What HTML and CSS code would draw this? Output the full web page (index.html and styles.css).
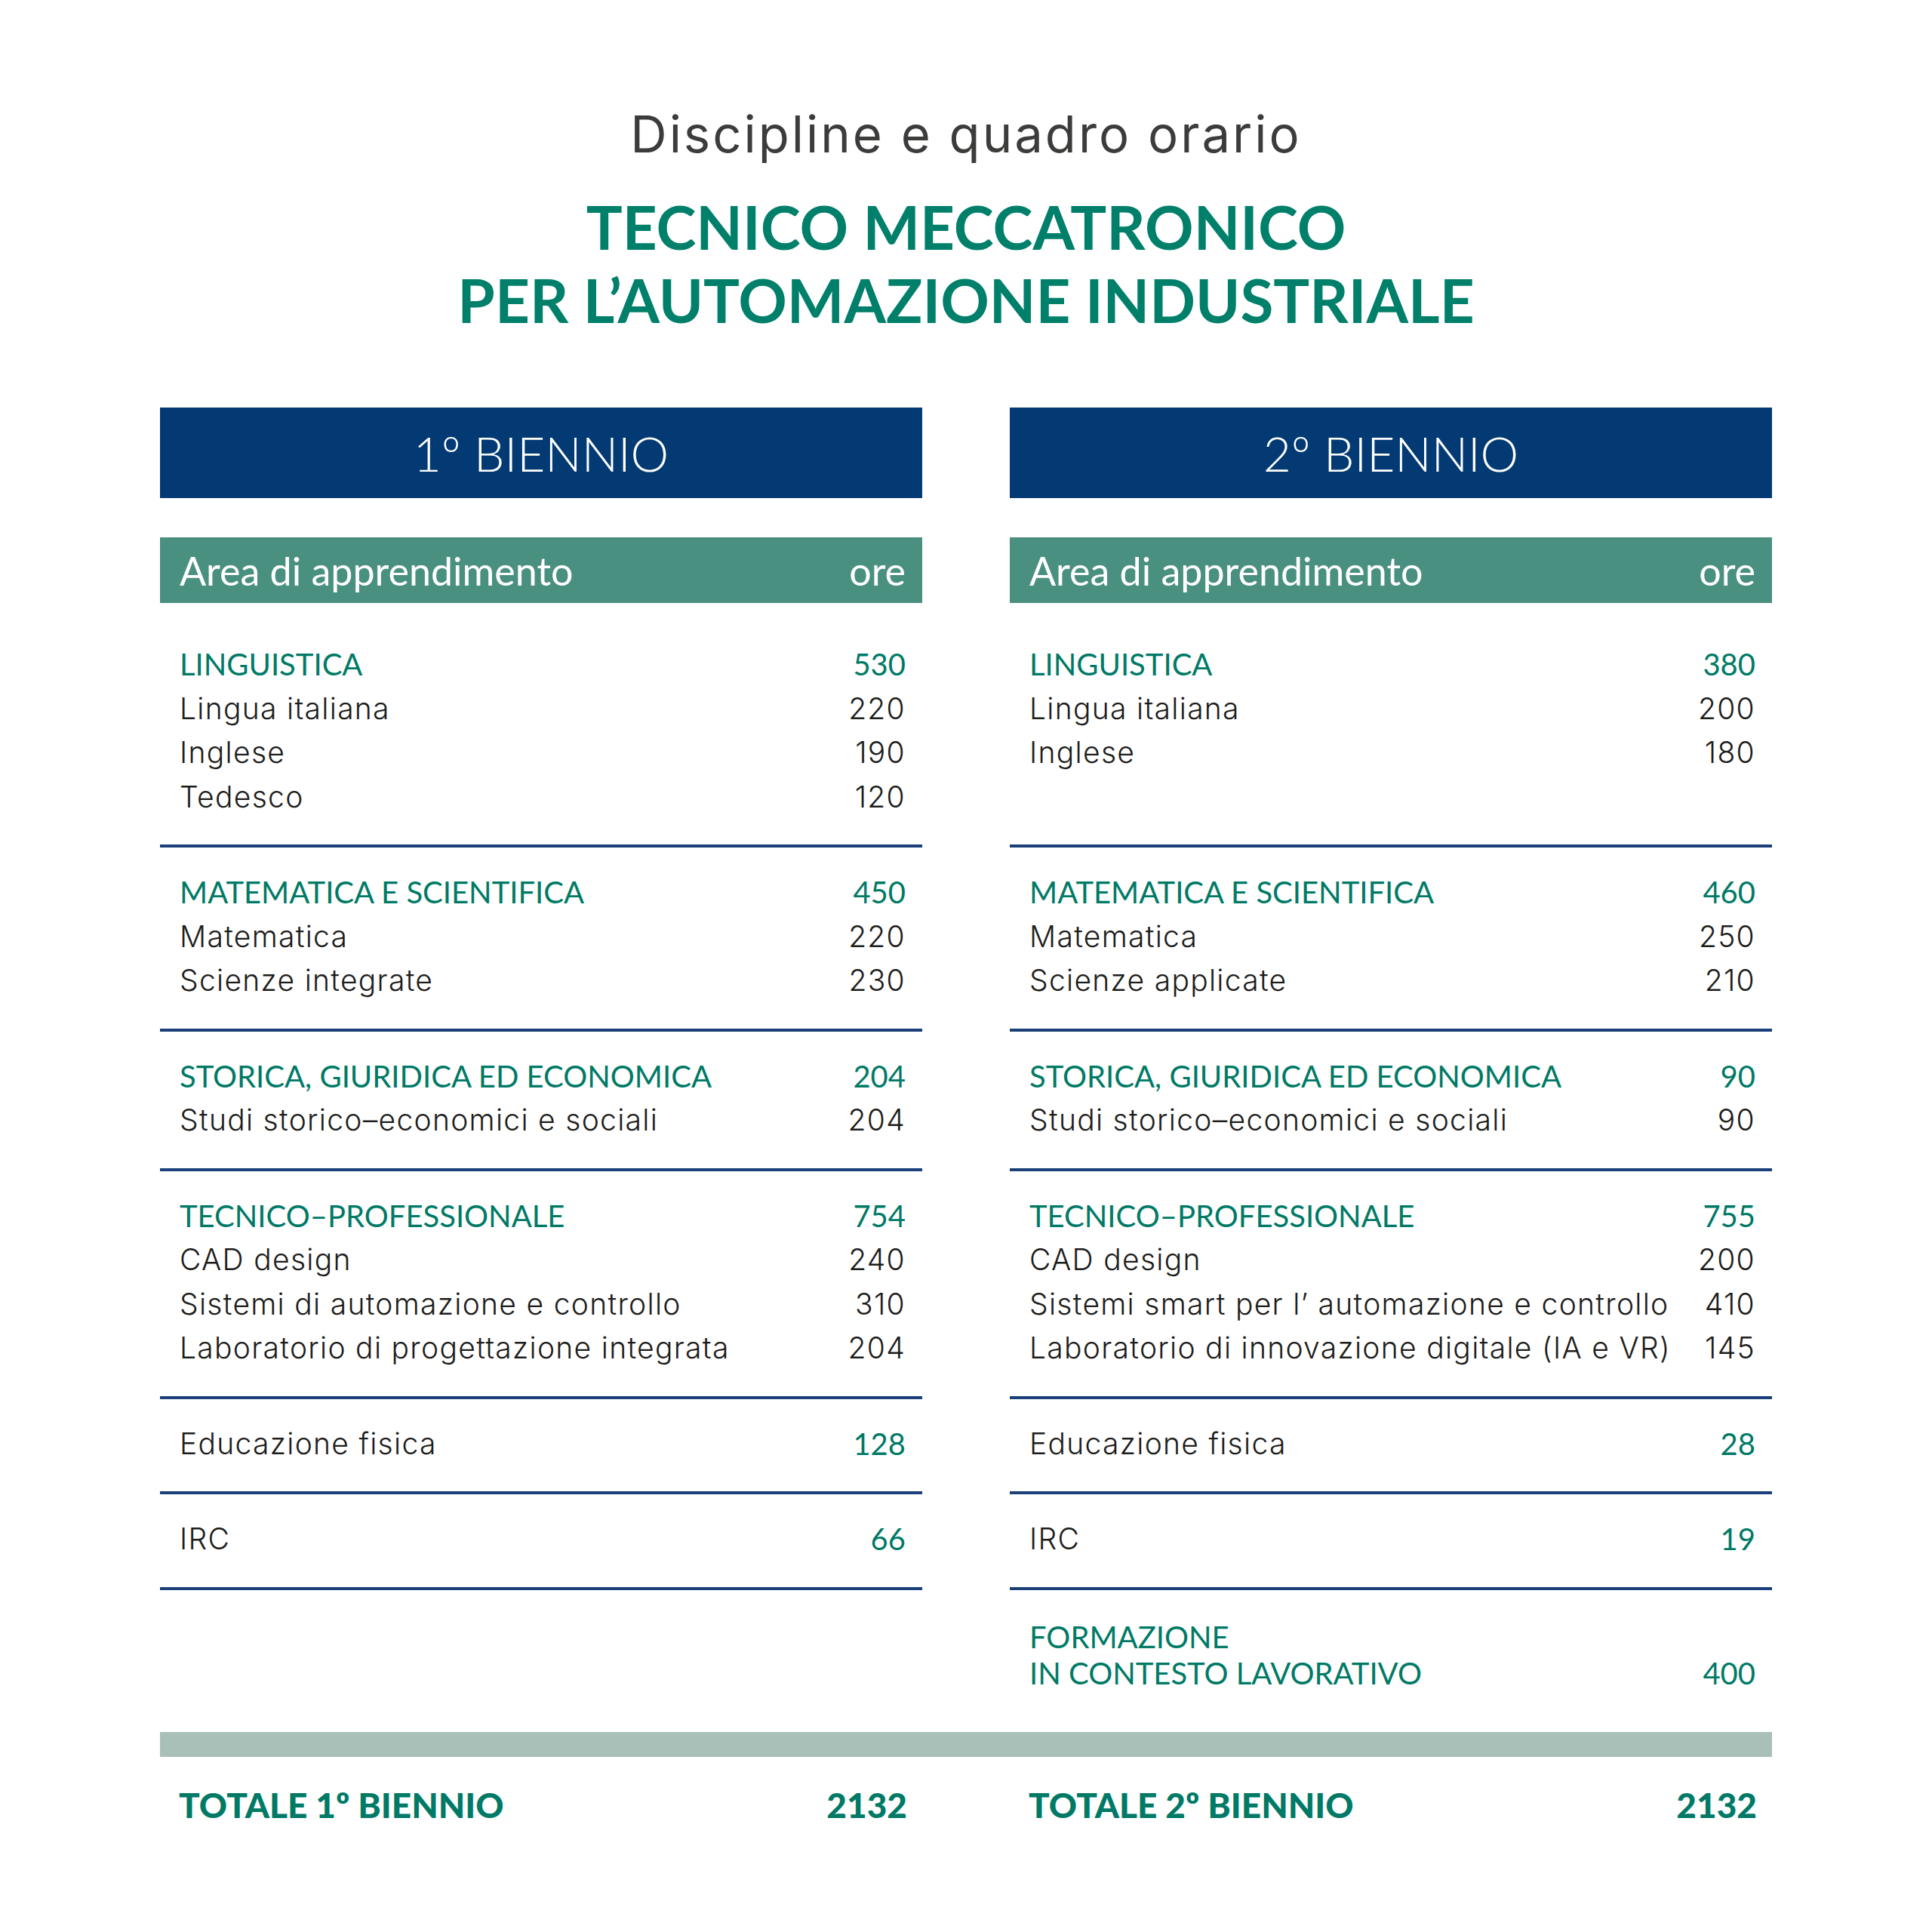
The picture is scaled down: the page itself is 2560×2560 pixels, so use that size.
FILE: index.html
```html
<!DOCTYPE html>
<html lang="it">
<head>
<meta charset="utf-8">
<title>Discipline e quadro orario</title>
<link rel="stylesheet" href="styles.css">
</head>
<body>
<main class="page">
  <header class="intro">
    <h2 class="subtitle">Discipline e quadro orario</h2>
    <h1 class="title">TECNICO MECCATRONICO<br>PER L’AUTOMAZIONE INDUSTRIALE</h1>
  </header>

  <div class="table">
    <div class="band">1º BIENNIO</div>
    <div class="band">2º BIENNIO</div>

    <div class="colhead"><span>Area di apprendimento</span><span>ore</span></div>
    <div class="colhead"><span>Area di apprendimento</span><span>ore</span></div>

    <section class="sec first">
      <div class="row cat"><span>LINGUISTICA</span><span>530</span></div>
      <div class="row"><span>Lingua italiana</span><span>220</span></div>
      <div class="row"><span>Inglese</span><span>190</span></div>
      <div class="row"><span>Tedesco</span><span>120</span></div>
    </section>
    <section class="sec first">
      <div class="row cat"><span>LINGUISTICA</span><span>380</span></div>
      <div class="row"><span>Lingua italiana</span><span>200</span></div>
      <div class="row"><span>Inglese</span><span>180</span></div>
    </section>

    <section class="sec">
      <div class="row cat"><span>MATEMATICA E SCIENTIFICA</span><span>450</span></div>
      <div class="row"><span>Matematica</span><span>220</span></div>
      <div class="row"><span>Scienze integrate</span><span>230</span></div>
    </section>
    <section class="sec">
      <div class="row cat"><span>MATEMATICA E SCIENTIFICA</span><span>460</span></div>
      <div class="row"><span>Matematica</span><span>250</span></div>
      <div class="row"><span>Scienze applicate</span><span>210</span></div>
    </section>

    <section class="sec">
      <div class="row cat"><span>STORICA, GIURIDICA ED ECONOMICA</span><span>204</span></div>
      <div class="row"><span>Studi storico–economici e sociali</span><span>204</span></div>
    </section>
    <section class="sec">
      <div class="row cat"><span>STORICA, GIURIDICA ED ECONOMICA</span><span>90</span></div>
      <div class="row"><span>Studi storico–economici e sociali</span><span>90</span></div>
    </section>

    <section class="sec">
      <div class="row cat"><span>TECNICO–PROFESSIONALE</span><span>754</span></div>
      <div class="row"><span>CAD design</span><span>240</span></div>
      <div class="row"><span>Sistemi di automazione e controllo</span><span>310</span></div>
      <div class="row"><span>Laboratorio di progettazione integrata</span><span>204</span></div>
    </section>
    <section class="sec">
      <div class="row cat"><span>TECNICO–PROFESSIONALE</span><span>755</span></div>
      <div class="row"><span>CAD design</span><span>200</span></div>
      <div class="row"><span>Sistemi smart per l’ automazione e controllo</span><span>410</span></div>
      <div class="row"><span>Laboratorio di innovazione digitale (IA e VR)</span><span>145</span></div>
    </section>

    <section class="sec">
      <div class="row"><span>Educazione fisica</span><span class="num">128</span></div>
    </section>
    <section class="sec">
      <div class="row"><span>Educazione fisica</span><span class="num">28</span></div>
    </section>

    <section class="sec">
      <div class="row"><span>IRC</span><span class="num">66</span></div>
    </section>
    <section class="sec">
      <div class="row"><span>IRC</span><span class="num">19</span></div>
    </section>

    <div class="empty"></div>
    <section class="sec extra">
      <div class="row cat"><span>FORMAZIONE<br>IN CONTESTO LAVORATIVO</span><span>400</span></div>
    </section>

    <div class="bar"></div>

    <div class="total"><span>TOTALE 1º BIENNIO</span><span>2132</span></div>
    <div class="total"><span>TOTALE 2º BIENNIO</span><span>2132</span></div>
  </div>
</main>
</body>
</html>
```

FILE: styles.css
```css
* {
  box-sizing: border-box;
}

html, body {
  margin: 0;
  padding: 0;
  background: #ffffff;
}

body {
  font-family: "Lato", "Liberation Sans", sans-serif;
  color: #1d1d1b;
}

.page {
  width: 2560px;
  padding-top: 138px;
  padding-bottom: 120px;
}

.intro {
  text-align: center;
}

.subtitle {
  margin: 0;
  font-family: "Inter", "Lato", sans-serif;
  font-size: 67px;
  line-height: 80px;
  font-weight: 400;
  letter-spacing: 3px;
  color: #3c3c3b;
}

.title {
  margin: 34px 0 0;
  font-size: 80px;
  line-height: 97px;
  font-weight: 700;
  color: #00806a;
}

.table {
  width: 2136px;
  margin: 94px auto 0;
  display: grid;
  grid-template-columns: 1010px 1010px;
  column-gap: 116px;
}

.band {
  height: 120px;
  background: #033a73;
  color: #ffffff;
  font-size: 64px;
  font-weight: 300;
  display: flex;
  align-items: center;
  justify-content: center;
}

.colhead {
  margin-top: 52px;
  height: 87px;
  background: #4a9080;
  color: #ffffff;
  font-size: 52px;
  font-weight: 400;
  display: flex;
  align-items: center;
  justify-content: space-between;
  padding: 0 22px 0 26px;
}

.sec {
  padding: 30px 22px 34px 26px;
  border-bottom: 4px solid #1b3f78;
}

.sec.first {
  padding-top: 52px;
}

.sec.extra {
  border-bottom: none;
  padding-top: 38px;
  padding-bottom: 54px;
}

.row {
  display: flex;
  justify-content: space-between;
  align-items: flex-end;
  font-family: "Inter", "Lato", sans-serif;
  font-size: 39px;
  line-height: 58.5px;
  font-weight: 300;
  letter-spacing: 1.3px;
  color: #1d1d1b;
}

.cat {
  font-family: "Lato", "Liberation Sans", sans-serif;
  font-size: 40px;
  letter-spacing: 0;
  color: #007a66;
  font-weight: 400;
}

.extra .cat {
  line-height: 48px;
}

.num {
  font-family: "Lato", "Liberation Sans", sans-serif;
  font-size: 40px;
  letter-spacing: 0;
  color: #007a66;
  font-weight: 400;
}

.bar {
  grid-column: 1 / 3;
  height: 33px;
  background: #a8c0b7;
}

.total {
  margin-top: 34px;
  display: flex;
  justify-content: space-between;
  align-items: center;
  padding: 0 20px 0 25px;
  font-size: 46px;
  line-height: 60px;
  font-weight: 900;
  color: #007a66;
}
```
